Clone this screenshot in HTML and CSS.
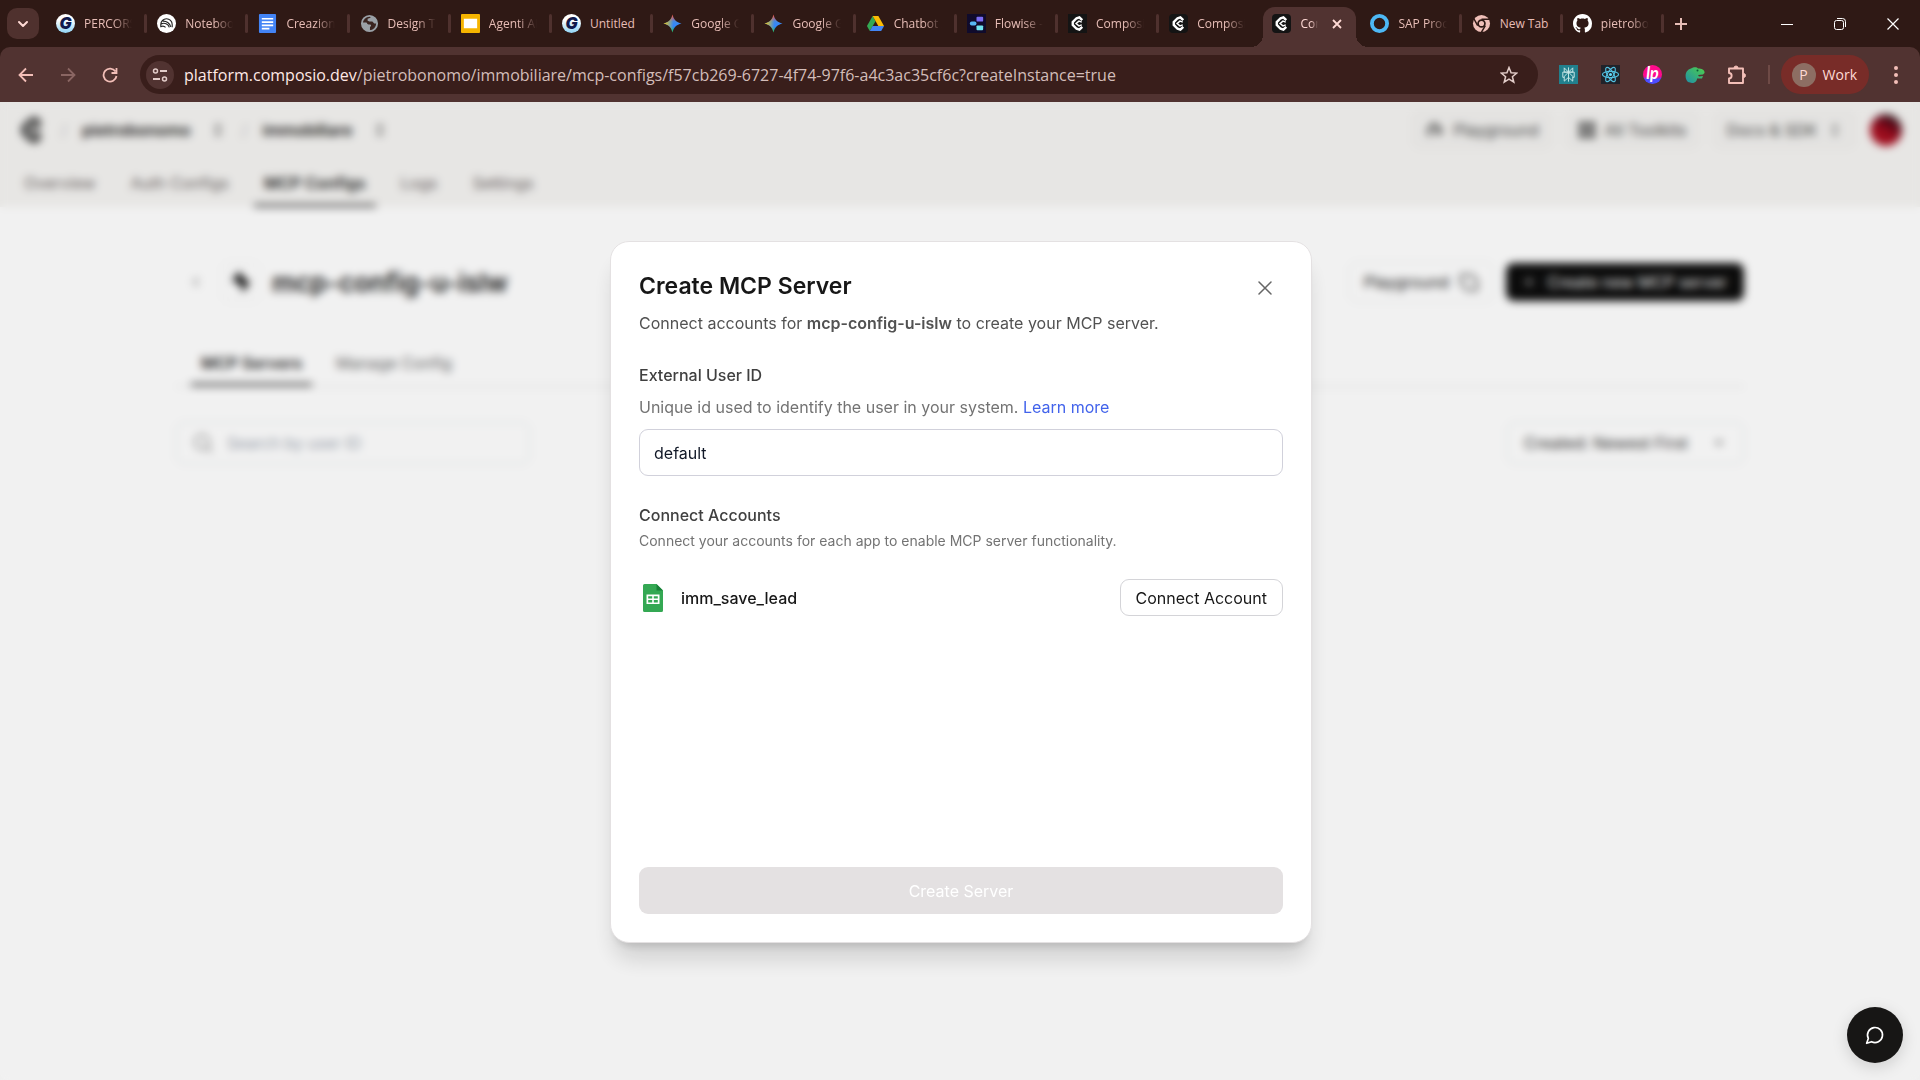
FILE: index.html
```html
<!DOCTYPE html>
<html lang="en">
<head>
    <meta charset="UTF-8">
    <meta name="viewport" content="width=device-width, initial-scale=1.0">
    <title>Create MCP Server - Composio</title>
    <link rel="stylesheet" href="styles.css">
</head>
<body>
    <!-- Shared icons -->
    <svg class="sprite" width="0" height="0" aria-hidden="true">
        <defs>
            <linearGradient id="gemA" x1="0" y1="0" x2="0" y2="1">
                <stop offset="0" stop-color="#ff4641"/>
                <stop offset="0.4" stop-color="#3f8ae8"/>
                <stop offset="0.65" stop-color="#3186ff"/>
                <stop offset="1" stop-color="#0ebc5f"/>
            </linearGradient>
            <linearGradient id="gemB" x1="0" y1="0" x2="1" y2="0">
                <stop offset="0" stop-color="#ffcc00"/>
                <stop offset="0.55" stop-color="#ffcc00" stop-opacity="0"/>
            </linearGradient>
            <linearGradient id="ringG" x1="0" y1="0" x2="0" y2="1">
                <stop offset="0.3" stop-color="#ffffff"/>
                <stop offset="1" stop-color="#8fd3f5"/>
            </linearGradient>
            <linearGradient id="lpBg" x1="0" y1="0" x2="0" y2="1">
                <stop offset="0.6" stop-color="#ff0a8c"/>
                <stop offset="0.75" stop-color="#4c4cff"/>
            </linearGradient>
            <linearGradient id="dinoBg" x1="0" y1="1" x2="1" y2="0">
                <stop offset="0" stop-color="#1f8fa8"/>
                <stop offset="1" stop-color="#4fd04a"/>
            </linearGradient>
        </defs>
        <symbol id="i-g" viewBox="0 0 20 20">
            <circle cx="10" cy="10" r="10" fill="url(#ringG)"/>
            <text x="10" y="16" text-anchor="middle" font-family="Inter, sans-serif" font-weight="900" font-style="italic" font-size="17" fill="#101a4d">G</text>
        </symbol>
        <symbol id="i-gem" viewBox="0 0 20 20">
            <path d="M10 0.500C11.300 6 14 8.700 19.500 10C14 11.300 11.300 14 10 19.500C8.700 14 6 11.300 0.500 10C6 8.700 8.700 6 10 0.500Z" fill="url(#gemA)"/>
            <path d="M10 0.500C11.300 6 14 8.700 19.500 10C14 11.300 11.300 14 10 19.500C8.700 14 6 11.300 0.500 10C6 8.700 8.700 6 10 0.500Z" fill="url(#gemB)"/>
        </symbol>
        <symbol id="i-composio" viewBox="0 0 20 20">
            <path d="M15 6.500L12 3.500L9 4.500L5 8.500V11.500L9 15.500L12 16.500L15 13.500" fill="none" stroke="currentColor" stroke-width="2.500"/>
            <path d="M14.500 8.500L11.500 7.500L8.500 10L11.500 12.500L14.500 11.500" fill="none" stroke="currentColor" stroke-width="1.500"/>
        </symbol>
        <symbol id="i-updown" viewBox="0 0 16 16">
            <path d="M5 6L8 3L11 6M5 10L8 13L11 10" fill="none" stroke="currentColor" stroke-width="1.500"/>
        </symbol>
        <symbol id="i-down" viewBox="0 0 16 16">
            <path d="M4 6L8 10L12 6" fill="none" stroke="currentColor" stroke-width="2" stroke-linecap="round" stroke-linejoin="round"/>
        </symbol>
        <symbol id="i-down-thin" viewBox="0 0 16 16">
            <path d="M5 6L8 9L11 6" fill="none" stroke="currentColor" stroke-width="1.500"/>
        </symbol>
    </svg>

    <!-- Browser window -->
    <div class="tab-strip">
        <button class="tab-search" aria-label="Search tabs"><svg width="16" height="16"><use href="#i-down"/></svg></button>
        <div class="tabs">
            <div class="tab"><svg class="favicon"><use href="#i-g"/></svg><span>PERCORSO</span></div>
            <div class="tab">
                <svg class="favicon" viewBox="0 0 20 20"><circle cx="10" cy="10" r="10" fill="#fff"/><path d="M4 14V11a6 6 0 0 1 12 0v3M4.500 10.500a6 6 0 0 1 8.500 3.500M6 7.500a8 8 0 0 1 8.500 6M4.500 13.200a4 4 0 0 1 4.500 1" fill="none" stroke="#222" stroke-width="1.200"/></svg>
                <span>NotebookLM</span>
            </div>
            <div class="tab">
                <svg class="favicon" viewBox="0 0 20 20"><rect x="1" width="18" height="20" rx="1" fill="#4384f5"/><path d="M4 5h12M4 8.500h12M4 12h12M4 15.500h8" stroke="#fff" stroke-width="1.800"/></svg>
                <span>Creazione</span>
            </div>
            <div class="tab">
                <svg class="favicon" viewBox="0 0 20 20"><circle cx="10" cy="10" r="8" fill="#3a2420" stroke="#9aa0a6" stroke-width="2"/><path d="M2 9H6C8 9 7 11 9 11H11C12 12 12 13 10.500 13.500V18C5 18 2 14 2 9ZM11 2V4L8 5V7L10 8H13L15 10H18C18 6 15 2 11 2Z" fill="#9aa0a6"/></svg>
                <span>Design Team</span>
            </div>
            <div class="tab">
                <svg class="favicon" viewBox="0 0 20 20"><rect width="20" height="20" rx="1" fill="#f5b400"/><rect x="3" y="5" width="14" height="10" fill="#fff"/></svg>
                <span>Agenti AI</span>
            </div>
            <div class="tab short"><svg class="favicon"><use href="#i-g"/></svg><span>Untitled</span></div>
            <div class="tab"><svg class="favicon"><use href="#i-gem"/></svg><span>Google Gemini</span></div>
            <div class="tab"><svg class="favicon"><use href="#i-gem"/></svg><span>Google Gemini</span></div>
            <div class="tab">
                <svg class="favicon" viewBox="0 0 20 20"><path d="M7 2L1 12.500L4 18L10 7.500Z" fill="#34a853"/><path d="M7 2H13L19 12.500H13Z" fill="#fbbc04"/><path d="M7 12.500H19L16 18H4Z" fill="#4285f4"/></svg>
                <span>Chatbot AI</span>
            </div>
            <div class="tab">
                <svg class="favicon" viewBox="0 0 20 20"><rect width="20" height="20" fill="#100b2c"/><rect x="10" y="3" width="7" height="5" rx="1" fill="#7a6cf5"/><rect x="3" y="8" width="7" height="4" rx="2" fill="#58b7f5"/><rect x="10" y="12" width="7" height="5" rx="1" fill="#6fe3f0"/></svg>
                <span>Flowise - Build</span>
            </div>
            <div class="tab"><svg class="favicon dark"><use href="#i-composio"/></svg><span>Composio</span></div>
            <div class="tab"><svg class="favicon dark rounded"><use href="#i-composio"/></svg><span>Composio</span></div>
            <div class="tab active">
                <svg class="favicon dark rounded"><use href="#i-composio"/></svg>
                <span>Composio</span>
                <button class="tab-close" aria-label="Close tab"><svg width="10" height="10" viewBox="0 0 10 10"><path d="M1 1L9 9M9 1L1 9" stroke="currentColor" stroke-width="1.800"/></svg></button>
            </div>
            <div class="tab">
                <svg class="favicon" viewBox="0 0 20 20"><circle cx="10" cy="10" r="8" fill="none" stroke="#4db8f5" stroke-width="4"/></svg>
                <span>SAP Process</span>
            </div>
            <div class="tab short">
                <svg class="favicon" viewBox="0 0 20 20"><circle cx="10" cy="10" r="9" fill="#f0bfb8"/><circle cx="10" cy="10" r="3.600" fill="#f0bfb8" stroke="#2f1915" stroke-width="1.800"/><path d="M10 5.500H18.500M6 12.200L2 5M14 12.200L9.700 19.500" stroke="#2f1915" stroke-width="1.600"/></svg>
                <span>New Tab</span>
            </div>
            <div class="tab">
                <svg class="favicon" viewBox="0 0 16 16"><path fill="#fff" d="M8 0C3.580 0 0 3.580 0 8c0 3.540 2.290 6.530 5.470 7.590.4.070.55-.17.55-.38 0-.19-.01-.82-.01-1.490-2.010.37-2.530-.49-2.690-.94-.09-.23-.48-.94-.82-1.130-.28-.15-.68-.52-.01-.53.63-.01 1.080.58 1.230.82.72 1.210 1.870.87 2.330.66.07-.52.28-.87.51-1.070-1.780-.2-3.640-.89-3.640-3.950 0-.87.31-1.590.82-2.150-.08-.2-.36-1.020.08-2.120 0 0 .67-.21 2.200.82.64-.18 1.320-.27 2-.27s1.360.09 2 .27c1.530-1.040 2.200-.82 2.200-.82.44 1.100.16 1.920.08 2.120.51.56.82 1.270.82 2.150 0 3.070-1.870 3.750-3.650 3.950.29.25.54.73.54 1.480 0 1.070-.01 1.930-.01 2.200 0 .21.15.46.55.38A8.010 8.010 0 0 0 16 8c0-4.420-3.580-8-8-8z"/></svg>
                <span>pietrobonomo</span>
            </div>
        </div>
        <button class="new-tab" aria-label="New tab"><svg width="14" height="14" viewBox="0 0 14 14"><path d="M7 1V13M1 7H13" stroke="currentColor" stroke-width="2"/></svg></button>
        <div class="window-controls">
            <button aria-label="Minimize"><svg width="12" height="12" viewBox="0 0 12 12"><path d="M0 6.500H12" stroke="currentColor"/></svg></button>
            <button aria-label="Restore"><svg width="14" height="14" viewBox="0 0 14 14"><rect x="1.500" y="3.500" width="9" height="9" rx="2" fill="none" stroke="currentColor"/><path d="M4 1.500H9.500A3 3 0 0 1 12.500 4.500V10" fill="none" stroke="currentColor"/></svg></button>
            <button aria-label="Close"><svg width="12" height="12" viewBox="0 0 12 12"><path d="M.5 .5L11.500 11.500M11.500 .5L.5 11.500" stroke="currentColor" stroke-width="1.200"/></svg></button>
        </div>
    </div>

    <div class="toolbar-back">
        <div class="toolbar">
            <button class="tool" aria-label="Back"><svg width="16" height="16" viewBox="0 0 16 16"><path d="M15 8H2M8 1.500L1.500 8L8 14.500" fill="none" stroke="currentColor" stroke-width="1.800"/></svg></button>
            <button class="tool" aria-label="Forward" disabled><svg width="16" height="16" viewBox="0 0 16 16"><path d="M1 8H14M8 1.500L14.500 8L8 14.500" fill="none" stroke="currentColor" stroke-width="1.800"/></svg></button>
            <button class="tool" aria-label="Reload"><svg width="16" height="16" viewBox="0 0 16 16"><path d="M13.500 4.500A6.500 6.500 0 1 0 14.500 9M14.500 1V6H9.500" fill="none" stroke="currentColor" stroke-width="1.800"/></svg></button>
            <div class="omnibox">
                <button class="site-info" aria-label="Site information"><svg width="16" height="16" viewBox="0 0 16 16"><circle cx="3.500" cy="4" r="2" fill="none" stroke="currentColor" stroke-width="1.500"/><circle cx="12.500" cy="12" r="2" fill="none" stroke="currentColor" stroke-width="1.500"/><path d="M8 4H15M1 12H8" stroke="currentColor" stroke-width="1.800"/></svg></button>
                <div class="url" role="textbox" aria-label="Address"><b>platform.composio.dev</b>/pietrobonomo/immobiliare/mcp-configs/f57cb269-6727-4f74-97f6-a4c3ac35cf6c?createInstance=true</div>
                <button class="star" aria-label="Bookmark this tab"><svg width="18" height="18" viewBox="0 0 18 18"><path d="M9 1.500L11.100 6.700L16.800 7.100L12.400 10.700L13.800 16.200L9 13.200L4.200 16.200L5.600 10.700L1.200 7.100L6.900 6.700Z" fill="none" stroke="currentColor" stroke-width="1.500"/></svg></button>
            </div>
            <div class="extensions">
                <button class="tool" aria-label="Perplexity"><svg width="19" height="19" viewBox="0 0 20 20"><rect width="20" height="20" fill="#21808d"/><path d="M10 2.500V17.500M5.500 3L10 7.500L14.500 3V7.500H5.500ZM4 7.500H16V13H14.500M4 7.500V13H5.500M10 7.500L5.500 12V17L10 13L14.500 17V12Z" fill="none" stroke="#c9e8e8"/></svg></button>
                <button class="tool" aria-label="React Developer Tools"><svg width="19" height="19" viewBox="0 0 20 20"><rect width="20" height="20" fill="#20232a"/><circle cx="10" cy="10" r="1.600" fill="#61dafb"/><g fill="none" stroke="#53c0e0" stroke-width="1.200"><ellipse cx="10" cy="10" rx="8.500" ry="3.300"/><ellipse cx="10" cy="10" rx="8.500" ry="3.300" transform="rotate(60 10 10)"/><ellipse cx="10" cy="10" rx="8.500" ry="3.300" transform="rotate(120 10 10)"/></g></svg></button>
                <button class="tool" aria-label="LP"><svg width="19" height="19" viewBox="0 0 20 20"><circle cx="10" cy="10" r="10" fill="url(#lpBg)"/><text x="10" y="15" text-anchor="middle" font-family="Lato, sans-serif" font-style="italic" font-weight="700" font-size="17" fill="#fff">lp</text></svg></button>
                <button class="tool" aria-label="Dino"><svg width="20" height="20" viewBox="0 0 20 20"><path d="M3 17C-1 13 0 5 6 3.500C9 1.500 12 2 13 3.500C17 3.500 20 5 19.500 8L18 9.500L13 10L14 11.500L18 11L17 13.500H12C12 16 10 18 7 18Z" fill="url(#dinoBg)"/><circle cx="12.500" cy="5.500" r="1" fill="#0b5d3d"/></svg></button>
                <button class="tool" aria-label="Extensions"><svg width="20" height="20" viewBox="0 0 20 20"><path d="M2 3.500H16V18H2V13.500C5.500 13.500 5.500 8 2 8Z" fill="none" stroke="currentColor" stroke-width="1.900" stroke-linejoin="round"/><path d="M7 3A2 2 0 0 1 11 3ZM16.500 8.500A2 2 0 0 1 16.500 12.500Z" fill="currentColor" stroke="currentColor"/></svg></button>
            </div>
            <button class="profile"><span class="initial">P</span>Work</button>
            <button class="menu" aria-label="Menu"><svg width="4" height="18" viewBox="0 0 4 18"><g fill="currentColor"><circle cx="2" cy="2" r="2"/><circle cx="2" cy="9" r="2"/><circle cx="2" cy="16" r="2"/></g></svg></button>
        </div>
    </div>

    <!-- Web page -->
    <div class="viewport">
        <div class="app">
            <header class="app-header">
                <div class="top-row">
                    <svg class="logo" viewBox="3 1 14 18"><use href="#i-composio" width="20" height="20"/></svg>
                    <span class="slash">/</span>
                    <span class="crumb">pietrobonomo</span>
                    <svg width="16" height="16"><use href="#i-updown"/></svg>
                    <span class="slash">/</span>
                    <span class="crumb">immobiliare</span>
                    <svg width="16" height="16"><use href="#i-updown"/></svg>
                    <div class="top-actions">
                        <button class="ghost"><svg width="18" height="18" viewBox="0 0 18 18"><path d="M4 15V8L9 3L15 8V12L10 11" fill="none" stroke="currentColor" stroke-width="3"/></svg>Playground</button>
                        <button class="ghost"><svg width="16" height="16" viewBox="0 0 16 16"><path d="M0 0H7V7H0ZM9 0H16V7H9ZM0 9H7V16H0ZM9 9H16V16H9Z" fill="currentColor"/></svg>All Toolkits</button>
                        <button class="ghost">Docs &amp; SDK<svg width="16" height="16"><use href="#i-updown"/></svg></button>
                        <span class="avatar"></span>
                    </div>
                </div>
                <nav class="app-nav">
                    <a href="#">Overview</a>
                    <a href="#">Auth Configs</a>
                    <a href="#" class="current">MCP Configs</a>
                    <a href="#">Logs</a>
                    <a href="#">Settings</a>
                </nav>
            </header>
            <main>
                <div class="title-row">
                    <svg width="16" height="16" viewBox="0 0 16 16"><path d="M10 4L6 8L10 12" fill="none" stroke="#777" stroke-width="1.500"/></svg>
                    <span class="config-icon"><svg width="18" height="24" viewBox="0 0 20 26"><path d="M8 1L0 11L10 17L12 25L20 13L14 9Z" fill="currentColor"/></svg></span>
                    <h1>mcp-config-u-islw</h1>
                    <button class="outline">Playground<svg width="20" height="20" viewBox="0 0 20 20"><path d="M2 3H13L18 8V18H8L2 12Z" fill="none" stroke="currentColor" stroke-width="1.500"/></svg></button>
                    <button class="primary"><svg width="12" height="12" viewBox="0 0 12 12"><path d="M6 1V11M1 6H11" stroke="currentColor"/></svg>Create new MCP server</button>
                </div>
                <div class="sub-tabs">
                    <a href="#" class="current">MCP Servers</a>
                    <a href="#">Manage Config</a>
                </div>
                <div class="filters">
                    <label class="search">
                        <svg width="20" height="20" viewBox="0 0 20 20"><circle cx="9" cy="9" r="7" fill="none" stroke="currentColor" stroke-width="1.500"/><path d="M14 14L19 19" stroke="currentColor" stroke-width="1.500"/></svg>
                        <input type="text" placeholder="Search by user ID" aria-label="Search by user ID">
                    </label>
                    <div class="sort">
                        <select aria-label="Sort"><option>Created: Newest First</option></select>
                        <svg width="16" height="16"><use href="#i-down-thin"/></svg>
                    </div>
                </div>
            </main>
        </div>

        <button class="chat" aria-label="Chat"><svg width="20" height="20" viewBox="0 0 24 24"><path d="M7.900 20A9 9 0 1 0 4 16.100L2 22Z" fill="none" stroke="currentColor" stroke-width="2" stroke-linejoin="round"/></svg></button>

        <!-- Create server dialog -->
        <div class="overlay">
            <form class="modal" role="dialog" aria-labelledby="modalTitle">
                <div class="modal-header">
                    <h2 id="modalTitle">Create MCP Server</h2>
                    <button type="button" class="close" aria-label="Close"><svg width="14" height="14" viewBox="0 0 14 14"><path d="M1 1L13 13M13 1L1 13" stroke="currentColor" stroke-width="1.500" stroke-linecap="round"/></svg></button>
                </div>
                <p class="intro">Connect accounts for <strong>mcp-config-u-islw</strong> to create your MCP server.</p>

                <div class="form-group">
                    <label for="userId">External User ID</label>
                    <p class="help">Unique id used to identify the user in your system. <a href="#">Learn more</a></p>
                    <input type="text" id="userId" name="userId" value="default">
                </div>

                <h3>Connect Accounts</h3>
                <p class="note">Connect your accounts for each app to enable MCP server functionality.</p>
                <div class="account">
                    <svg width="20" height="28" viewBox="0 0 20 28"><path d="M1.500 0H13.500L20 6.500V26.500A1.500 1.500 0 0 1 18.500 28H1.500A1.500 1.500 0 0 1 0 26.500V1.500A1.500 1.500 0 0 1 1.500 0Z" fill="#34a853"/><path d="M13.500 0L20 6.500H13.500Z" fill="#188038"/><path d="M3.500 10.500H16.500V20H3.500Z" fill="#fff"/><path d="M5.200 12.200H9.200V14.500H5.200ZM10.800 12.200H14.800V14.500H10.800ZM5.200 16.100H9.200V18.400H5.200ZM10.800 16.100H14.800V18.400H10.800Z" fill="#34a853"/></svg>
                    <span>imm_save_lead</span>
                    <button type="button" class="connect">Connect Account</button>
                </div>

                <button type="submit" class="submit" disabled>Create Server</button>
            </form>
        </div>
    </div>
</body>
</html>
```
FILE: styles.css
```css
/* General */
* {
    box-sizing: border-box;
}

body {
    margin: 0;
    height: 100vh;
    display: flex;
    flex-direction: column;
    overflow: hidden;
    font-family: Inter, sans-serif;
    font-size: 16px;
    color: #171717;
}

h1, h2, h3, p {
    margin: 0;
}

button {
    display: flex;
    align-items: center;
    justify-content: center;
    padding: 0;
    border: none;
    background: none;
    font: inherit;
    color: inherit;
}

a {
    color: inherit;
    text-decoration: none;
}

svg {
    flex-shrink: 0;
}

.sprite {
    position: absolute;
}

/* Tab strip */
.tab-strip {
    display: flex;
    height: 47px;
    background: #2f1915;
    color: #e7bdb6;
    font-family: "Open Sans", sans-serif;
    font-size: 12px;
}

.tab-search {
    width: 32px;
    height: 31px;
    margin: 8px 7px 0;
    border-radius: 10px;
    background: #4f312e;
    color: #ffdad5;
}

.tabs {
    display: flex;
    flex: 1;
    min-width: 0;
}

.tab {
    position: relative;
    display: flex;
    flex: 1;
    align-items: center;
    gap: 9px;
    min-width: 0;
    padding: 0 15px 0 10px;
}

.tab::after {
    content: "";
    position: absolute;
    right: 0;
    top: 14px;
    width: 3px;
    height: 19px;
    border-radius: 2px;
    background: #4f312e;
}

.tab span {
    flex: 1;
    overflow: hidden;
    white-space: nowrap;
    mask-image: linear-gradient(to right, #000 60%, transparent);
}

.tab.short span {
    overflow: visible;
    mask-image: none;
}

.favicon {
    width: 19px;
    height: 19px;
}

.favicon.dark {
    background: #141414;
    color: #fff;
}

.favicon.rounded {
    border-radius: 4px;
}

.tab.active {
    flex: 0 0 93px;
    margin: 7px 4px 0 3px;
    padding: 0 14px 7px 9px;
    border-radius: 12px 12px 0 0;
    background: #513331;
    color: #ffdad5;
}

.tab.active::before,
.tab.active::after {
    content: "";
    position: absolute;
    top: auto;
    bottom: 0;
    width: 12px;
    height: 12px;
    border-radius: 0;
}

.tab.active::before {
    left: -12px;
    background: radial-gradient(circle at 0 0, #2f1915 12px, #513331 12px);
}

.tab.active::after {
    right: -12px;
    background: radial-gradient(circle at 100% 0, #2f1915 12px, #513331 12px);
}

.tab:has(+ .active)::after {
    display: none;
}

.tab-close {
    margin-left: 5px;
}

.new-tab {
    width: 34px;
    margin-right: 62px;
}

.window-controls {
    display: flex;
    width: 160px;
    color: #fff;
}

.window-controls button {
    flex: 1;
}

/* Toolbar */
.toolbar-back {
    background: #2f1915;
}

.toolbar {
    display: flex;
    align-items: center;
    height: 55px;
    padding: 0 8px 0 5px;
    border-radius: 10px 10px 0 0;
    background: #513331;
    color: #f3bfb8;
    font-family: "Open Sans", sans-serif;
}

.tool {
    width: 42px;
    height: 39px;
}

.tool:disabled {
    color: #8a6663;
}

.omnibox {
    display: flex;
    flex: 1;
    align-items: center;
    min-width: 0;
    height: 39px;
    margin: 0 10px 0 9px;
    padding: 0 20px 0 6px;
    border-radius: 20px;
    background: #391e1b;
    color: #e3cdc9;
}

.site-info {
    width: 28px;
    height: 28px;
    border-radius: 50%;
    background: #513331;
}

.url {
    flex: 1;
    margin-left: 10px;
    overflow: hidden;
    white-space: nowrap;
    font-size: 16px;
    color: #d3bdb9;
}

.url b {
    font-weight: 400;
    color: #ffe9e6;
}

.extensions {
    display: flex;
    padding-right: 10px;
}

.profile {
    position: relative;
    gap: 7px;
    height: 39px;
    margin-left: 13px;
    padding: 0 12px 0 11px;
    border-radius: 20px;
    background: #782c28;
    color: #ffdad5;
    font-size: 14px;
}

.profile::before {
    content: "";
    position: absolute;
    left: -13px;
    width: 2px;
    height: 19px;
    background: #6e4a46;
}

.initial {
    width: 24px;
    border-radius: 50%;
    background: #8d6e63;
    line-height: 24px;
    text-align: center;
}

.menu {
    width: 32px;
    height: 39px;
    margin-left: 11px;
}

/* Page behind the dialog */
.viewport {
    position: relative;
    flex: 1;
    min-height: 0;
    overflow: hidden;
    background: #fefefe;
}

.app-header {
    background: #f4f3f1;
}

.top-row {
    display: flex;
    align-items: center;
    height: 55px;
    padding: 0 18px;
}

.logo {
    width: 28px;
    height: 30px;
}

.slash {
    width: 36px;
    text-align: center;
    color: #bbb;
}

.crumb {
    font-weight: 600;
    margin-right: 20px;
}

.top-actions {
    display: flex;
    align-items: center;
    gap: 14px;
    margin-left: auto;
}

.ghost {
    gap: 10px;
    height: 38px;
    padding: 0 12px;
    border: 1px solid #ebe9e7;
    border-radius: 8px;
    background: #f1f0ee;
    color: #444;
}

.avatar {
    width: 32px;
    height: 32px;
    border-radius: 50%;
    background: linear-gradient(30deg, #a80f20 40%, #6b0618 65%, #222 90%);
}

.app-nav {
    display: flex;
    gap: 15px;
    height: 50px;
    padding: 0 14px;
    color: #675f5f;
}

.app-nav a,
.sub-tabs a {
    padding: 0 10px;
    border-bottom: 3px solid transparent;
    line-height: 52px;
}

.app-nav .current,
.sub-tabs .current {
    border-color: #444;
    color: #222;
    font-weight: 600;
}

main {
    max-width: 1568px;
    margin: 0 auto;
    padding-top: 55px;
}

.title-row {
    display: flex;
    align-items: center;
    gap: 12px;
    height: 40px;
    padding-left: 12px;
}

.config-icon {
    display: grid;
    place-items: center;
    width: 38px;
    height: 40px;
    margin-left: 6px;
    border: 1px solid #eee;
    border-radius: 8px;
}

.title-row h1 {
    flex: 1;
    font-size: 26px;
    font-weight: 600;
}

.outline {
    gap: 10px;
    height: 40px;
    padding: 0 14px;
    border: 1px solid #e5e7e8;
    border-radius: 8px;
}

.primary {
    gap: 12px;
    height: 38px;
    padding: 0 17px;
    border-radius: 8px;
    background: #0c0c0c;
    color: #fff;
}

.sub-tabs {
    display: flex;
    gap: 14px;
    height: 48px;
    margin-top: 37px;
    padding-left: 15px;
    border-bottom: 1px solid #ddd;
    color: #666;
}

.sub-tabs a {
    line-height: 48px;
}

.filters {
    display: flex;
    justify-content: space-between;
    height: 42px;
    margin-top: 35px;
}

.search {
    display: flex;
    align-items: center;
    gap: 14px;
    width: 354px;
    padding: 0 16px;
    border: 1px solid #dfe3e5;
    border-radius: 8px;
    color: #777;
}

.search input {
    width: 100%;
    padding: 0;
    border: none;
    background: none;
    font: inherit;
}

.search input::placeholder {
    color: #9ca3af;
}

.sort {
    display: flex;
    align-items: center;
    gap: 16px;
    padding: 0 16px;
    border: 1px solid #dfe3e5;
    border-radius: 8px;
}

.sort select {
    padding: 0;
    width: 171px;
    border: none;
    appearance: none;
    background: none;
    font: inherit;
    color: #333;
}

.chat {
    position: absolute;
    right: 17px;
    bottom: 17px;
    z-index: 2;
    width: 56px;
    height: 56px;
    border-radius: 50%;
    background: #171615;
    color: #fff;
    box-shadow: 0 4px 16px rgba(0, 0, 0, 0.15);
}

/* Dialog */
.overlay {
    position: absolute;
    inset: 0;
    display: grid;
    place-items: center;
    padding: 2px 0 0 2px;
    background: rgba(0, 0, 0, 0.05);
    backdrop-filter: blur(4px);
}

.modal {
    display: flex;
    flex-direction: column;
    width: 702px;
    max-width: 100%;
    min-height: 702px;
    padding: 28px;
    border: 1px solid #e4e1e2;
    border-radius: 19px;
    background: #fff;
    box-shadow: 0 20px 25px -5px rgba(0, 0, 0, 0.15), 0 8px 10px -6px rgba(0, 0, 0, 0.15);
}

.modal-header {
    display: flex;
    justify-content: space-between;
}

.modal h2 {
    font-size: 23px;
    font-weight: 600;
    line-height: 32px;
}

.close {
    width: 36px;
    height: 36px;
    color: #666;
}

.intro {
    margin-top: 5px;
    line-height: 24px;
    color: #525252;
}

.intro strong {
    font-weight: 600;
}

.form-group {
    margin-top: 28px;
}

.form-group label,
.modal h3 {
    display: block;
    font-size: 16px;
    font-weight: 500;
    line-height: 24px;
    color: #404040;
}

.help {
    margin: 8px 0 10px;
    line-height: 24px;
    color: #737373;
}

.help a {
    color: #4263eb;
}

.form-group input {
    width: 100%;
    height: 47px;
    padding: 0 14px;
    border: 1px solid #d1d1db;
    border-radius: 9px;
    font: inherit;
    color: #111827;
}

.modal h3 {
    margin-top: 27px;
}

.note {
    margin-top: 4px;
    font-size: 14px;
    line-height: 20px;
    color: #737373;
}

.account {
    display: flex;
    align-items: center;
    gap: 18px;
    margin-top: 28px;
    padding-left: 4px;
    font-weight: 500;
}

.connect {
    height: 37px;
    margin-left: auto;
    padding: 0 15px;
    border: 1px solid #d4d4d8;
    border-radius: 9px;
    font-weight: 400;
}

.submit {
    height: 47px;
    margin-top: auto;
    border-radius: 9px;
    background: #e4e1e2;
    color: #fff;
}
```
